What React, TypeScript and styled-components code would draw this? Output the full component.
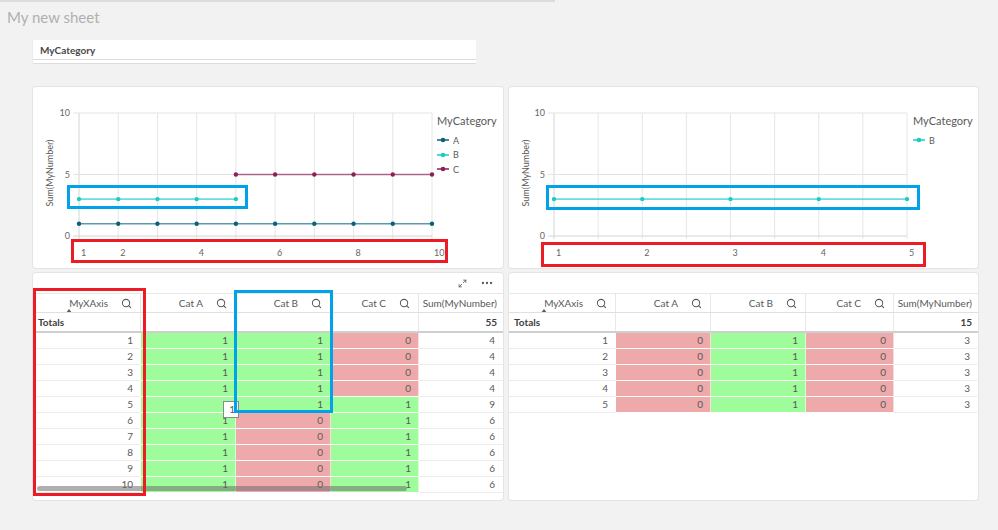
import React from 'react';
import styled, { createGlobalStyle } from 'styled-components';
import { Search, Maximize2, MoreHorizontal } from 'lucide-react';

const GlobalStyle = createGlobalStyle`
  html, body { margin: 0; padding: 0; background: #f2f2f2; }
  body { font-family: Lato, "Noto Sans", sans-serif; }
  * { box-sizing: border-box; }
`;

const Page = styled.div`
  width: 998px;
  height: 530px;
  overflow: hidden;
  background: #f2f2f2;
`;

const TabLine = styled.div`
  width: 555px;
  height: 2px;
  background: #dcdcdc;
`;

const Title = styled.h1`
  margin: 0;
  padding-left: 7px;
  height: 30px;
  line-height: 31px;
  font-size: 15px;
  font-weight: 400;
  color: #b0b0b0;
`;

const FilterBox = styled.div`
  margin: 8px 0 0 33px;
  width: 443px;
  height: 23px;
  background: #fff;
  box-shadow: 0 1px 0 #dedede, -1px 0 0 #ececec;
`;

const FilterHeader = styled.div`
  height: 20px;
  line-height: 20px;
  padding-left: 7px;
  font-size: 10px;
  font-weight: 700;
  color: #484848;
  border-bottom: 1px solid #dcdcdc;
`;

const Grid = styled.div`
  margin-top: 24px;
  padding-left: 33px;
  display: grid;
  grid-template-columns: 470px 469px;
  grid-template-rows: 181px 227px;
  column-gap: 6px;
  row-gap: 5px;
`;

const Panel = styled.div`
  position: relative;
  background: #fff;
  border-radius: 3px;
  box-shadow: 0 0 0 1px #e4e4e4;
`;

const ChartPanel = styled(Panel)`
  display: flex;
`;

const ChartSvg = styled.svg`
  flex: none;
  overflow: visible;
`;

const Legend = styled.div`
  padding-top: 27px;
  display: flex;
  flex-direction: column;
`;

const LegendTitle = styled.div`
  font-size: 11px;
  line-height: 14px;
  color: #595959;
  margin-bottom: 5px;
`;

const LegendItem = styled.div`
  display: flex;
  align-items: center;
  gap: 4px;
  height: 14.5px;
  font-size: 9px;
  color: #595959;
`;

const Highlight = styled.div<{ $x: number; $y: number; $w: number; $h: number; $c: string }>`
  position: absolute;
  left: ${(p) => p.$x}px;
  top: ${(p) => p.$y}px;
  width: ${(p) => p.$w}px;
  height: ${(p) => p.$h}px;
  border: 3px solid ${(p) => p.$c};
  pointer-events: none;
  z-index: 5;
`;

const RED = '#ed1c24';
const BLUE = '#00a2e8';

type Series = { color: string; value: number; idxs: number[] };
type ChartCfg = {
  plotL: number;
  plotR: number;
  gridCount: number;
  labels: { text: string; idx: number }[];
  series: Series[];
  legend: { label: string; color: string }[];
};

const TOP = 26;
const ZERO = 149;
const vy = (v: number) => ZERO - v * ((ZERO - TOP) / 10);

const LegendMarker: React.FC<{ color: string }> = ({ color }) => (
  <svg width="12" height="6" viewBox="0 0 12 6">
    <line x1="0" y1="3" x2="12" y2="3" stroke={color} strokeWidth="1.5" />
    <circle cx="6" cy="3" r="2.3" fill={color} />
  </svg>
);

const LineChart: React.FC<{ cfg: ChartCfg }> = ({ cfg }) => {
  const step = (cfg.plotR - cfg.plotL) / (cfg.gridCount - 1);
  const gx = (i: number) => cfg.plotL + i * step;
  return (
    <>
      <ChartSvg width="404" height="181" viewBox="0 0 404 181">
        {Array.from({ length: cfg.gridCount }).map((_, i) => (
          <line key={i} x1={gx(i)} y1={TOP} x2={gx(i)} y2={ZERO + 3} stroke={i === 0 ? '#d4d4d4' : '#e6e6e6'} strokeWidth="1" />
        ))}
        {[10, 5].map((v) => (
          <line key={v} x1={cfg.plotL - 6} y1={vy(v)} x2={cfg.plotR} y2={vy(v)} stroke="#e3e3e3" strokeWidth="1" />
        ))}
        <line x1={cfg.plotL - 6} y1={ZERO} x2={cfg.plotR} y2={ZERO} stroke="#d4d4d4" strokeWidth="1" />
        {[10, 5, 0].map((v) => (
          <text key={v} x={cfg.plotL - 9} y={vy(v) + 3} textAnchor="end" fontSize="9" fill="#666" fontFamily="Lato, sans-serif">
            {v}
          </text>
        ))}
        <text
          x={0}
          y={0}
          transform="translate(20 86) rotate(-90)"
          textAnchor="middle"
          fontSize="9"
          fill="#595959"
          fontFamily="Lato, sans-serif"
        >
          Sum(MyNumber)
        </text>
        {cfg.labels.map((l) => (
          <text key={l.text} x={gx(l.idx) + 2} y={169} fontSize="9" fill="#666" fontFamily="Lato, sans-serif">
            {l.text}
          </text>
        ))}
        {cfg.series.map((s, si) => {
          const pts = s.idxs.map((i) => `${gx(i)},${vy(s.value)}`).join(' ');
          return (
            <g key={si}>
              <polyline points={pts} fill="none" stroke={s.color} strokeOpacity="0.65" strokeWidth="1.6" />
              {s.idxs.map((i) => (
                <circle key={i} cx={gx(i)} cy={vy(s.value)} r="2.2" fill={s.color} />
              ))}
            </g>
          );
        })}
      </ChartSvg>
      <Legend>
        <LegendTitle>MyCategory</LegendTitle>
        {cfg.legend.map((l) => (
          <LegendItem key={l.label}>
            <LegendMarker color={l.color} />
            {l.label}
          </LegendItem>
        ))}
      </Legend>
    </>
  );
};

const CA = '#0b6179';
const CB = '#18cdc6';
const CC = '#8c1f56';

const chart1: ChartCfg = {
  plotL: 46,
  plotR: 399,
  gridCount: 10,
  labels: [
    { text: '1', idx: 0 },
    { text: '2', idx: 1 },
    { text: '4', idx: 3 },
    { text: '6', idx: 5 },
    { text: '8', idx: 7 },
    { text: '10', idx: 9 },
  ],
  series: [
    { color: CA, value: 1, idxs: [0, 1, 2, 3, 4, 5, 6, 7, 8, 9] },
    { color: CB, value: 3, idxs: [0, 1, 2, 3, 4] },
    { color: CC, value: 5, idxs: [4, 5, 6, 7, 8, 9] },
  ],
  legend: [
    { label: 'A', color: CA },
    { label: 'B', color: CB },
    { label: 'C', color: CC },
  ],
};

const chart2: ChartCfg = {
  plotL: 45,
  plotR: 398,
  gridCount: 9,
  labels: [
    { text: '1', idx: 0 },
    { text: '2', idx: 2 },
    { text: '3', idx: 4 },
    { text: '4', idx: 6 },
    { text: '5', idx: 8 },
  ],
  series: [{ color: CB, value: 3, idxs: [0, 2, 4, 6, 8] }],
  legend: [{ label: 'B', color: CB }],
};

/* ---------- Table ---------- */

const TablePanel = styled(Panel)`
  display: flex;
  flex-direction: column;
`;

const Toolbar = styled.div`
  height: 20px;
  display: flex;
  align-items: center;
  justify-content: flex-end;
  gap: 13px;
  padding-right: 9px;
  color: #595959;
`;

const Row = styled.div<{ $cols: string }>`
  display: grid;
  grid-template-columns: ${(p) => p.$cols};
`;

const HeaderRow = styled(Row)`
  height: 20px;
  border-top: 1px solid #e8e8e8;
  border-bottom: 1px solid #e0e0e0;
`;

const TotalsRow = styled(Row)`
  height: 20px;
  border-bottom: 2px solid #cfcfcf;
`;

const HeadCell = styled.div<{ $last?: boolean }>`
  display: flex;
  align-items: center;
  justify-content: flex-end;
  gap: 13px;
  padding-right: ${(p) => (p.$last ? 6 : 8)}px;
  font-size: 10px;
  color: #595959;
  white-space: nowrap;
  overflow: hidden;
  border-right: ${(p) => (p.$last ? 'none' : '1px solid #e8e8e8')};
`;

const HeadLabel = styled.span`
  position: relative;
`;

const SortArrow = styled.span`
  position: absolute;
  left: -3px;
  top: 100%;
  width: 0;
  height: 0;
  border-left: 3px solid transparent;
  border-right: 3px solid transparent;
  border-bottom: 4px solid #595959;
`;

const TotalCell = styled.div<{ $label?: boolean; $last?: boolean }>`
  display: flex;
  align-items: center;
  justify-content: ${(p) => (p.$label ? 'flex-start' : 'flex-end')};
  padding: 0 6px 0 5px;
  font-size: 10px;
  font-weight: 700;
  color: #404040;
  border-right: ${(p) => (p.$last ? 'none' : '1px solid #e8e8e8')};
`;

type Tone = 'green' | 'red' | 'none';

const Cell = styled.div<{ $tone: Tone }>`
  height: 16px;
  line-height: 15px;
  text-align: right;
  padding-right: 7px;
  font-size: 10px;
  color: #5a5a5a;
  background: ${(p) => (p.$tone === 'green' ? '#9ffc9a' : p.$tone === 'red' ? '#eeaaaa' : '#fff')};
  border-bottom: 1px solid ${(p) => (p.$tone === 'none' ? '#ececec' : '#fff')};
  border-right: 1px solid ${(p) => (p.$tone === 'none' ? 'transparent' : 'rgba(255,255,255,0.6)')};
`;

const ScrollThumb = styled.div`
  position: absolute;
  left: 4px;
  top: 213px;
  width: 370px;
  height: 5px;
  border-radius: 3px;
  background: rgba(110, 110, 110, 0.55);
  z-index: 3;
`;

const CursorBox = styled.div`
  position: absolute;
  left: 190px;
  top: 128px;
  width: 16px;
  height: 17px;
  background: #fff;
  border: 1px solid #8a8a8a;
  font-size: 10px;
  color: #5a5a5a;
  text-align: right;
  padding-right: 3px;
  line-height: 14px;
  z-index: 4;
`;

const HEADERS = ['MyXAxis', 'Cat A', 'Cat B', 'Cat C', 'Sum(MyNumber)'];

const DataTable: React.FC<{ cols: string; rows: number[][]; total: string; tools?: boolean }> = ({
  cols,
  rows,
  total,
  tools,
}) => (
  <>
    <Toolbar>
      {tools && (
        <>
          <Maximize2 size={9} strokeWidth={2.2} />
          <MoreHorizontal size={14} strokeWidth={2} />
        </>
      )}
    </Toolbar>
    <HeaderRow $cols={cols}>
      {HEADERS.map((h, i) => (
        <HeadCell key={h} $last={i === 4}>
          <HeadLabel>
            {h}
            {i === 0 && <SortArrow />}
          </HeadLabel>
          {i < 4 && <Search size={11} strokeWidth={2.2} />}
        </HeadCell>
      ))}
    </HeaderRow>
    <TotalsRow $cols={cols}>
      <TotalCell $label>Totals</TotalCell>
      <TotalCell />
      <TotalCell />
      <TotalCell />
      <TotalCell $last>{total}</TotalCell>
    </TotalsRow>
    {rows.map((r) => (
      <Row key={r[0]} $cols={cols}>
        {r.map((v, i) => {
          const tone: Tone = i === 0 || i === 4 ? 'none' : v === 1 ? 'green' : 'red';
          return (
            <Cell key={i} $tone={tone}>
              {v}
            </Cell>
          );
        })}
      </Row>
    ))}
  </>
);

const rows1 = [
  [1, 1, 1, 0, 4],
  [2, 1, 1, 0, 4],
  [3, 1, 1, 0, 4],
  [4, 1, 1, 0, 4],
  [5, 1, 1, 1, 9],
  [6, 1, 0, 1, 6],
  [7, 1, 0, 1, 6],
  [8, 1, 0, 1, 6],
  [9, 1, 0, 1, 6],
  [10, 1, 0, 1, 6],
];

const rows2 = [1, 2, 3, 4, 5].map((n) => [n, 0, 1, 0, 3]);

export default function App() {
  return (
    <Page>
      <GlobalStyle />
      <TabLine />
      <Title>My new sheet</Title>
      <FilterBox>
        <FilterHeader>MyCategory</FilterHeader>
      </FilterBox>
      <Grid>
        <ChartPanel>
          <LineChart cfg={chart1} />
          <Highlight $x={34} $y={98} $w={181} $h={24} $c={BLUE} />
          <Highlight $x={38} $y={152} $w={377} $h={24} $c={RED} />
        </ChartPanel>
        <ChartPanel>
          <LineChart cfg={chart2} />
          <Highlight $x={37} $y={98} $w={374} $h={25} $c={BLUE} />
          <Highlight $x={32} $y={155} $w={385} $h={25} $c={RED} />
        </ChartPanel>
        <TablePanel>
          <DataTable cols="108px 95px 95px 88px 1fr" rows={rows1} total="55" tools />
          <CursorBox>1</CursorBox>
          <ScrollThumb />
          <Highlight $x={0} $y={15} $w={113} $h={208} $c={RED} />
          <Highlight $x={201} $y={17} $w={99} $h={123} $c={BLUE} />
        </TablePanel>
        <TablePanel>
          <DataTable cols="107px 95px 95px 88px 1fr" rows={rows2} total="15" />
        </TablePanel>
      </Grid>
    </Page>
  );
}
